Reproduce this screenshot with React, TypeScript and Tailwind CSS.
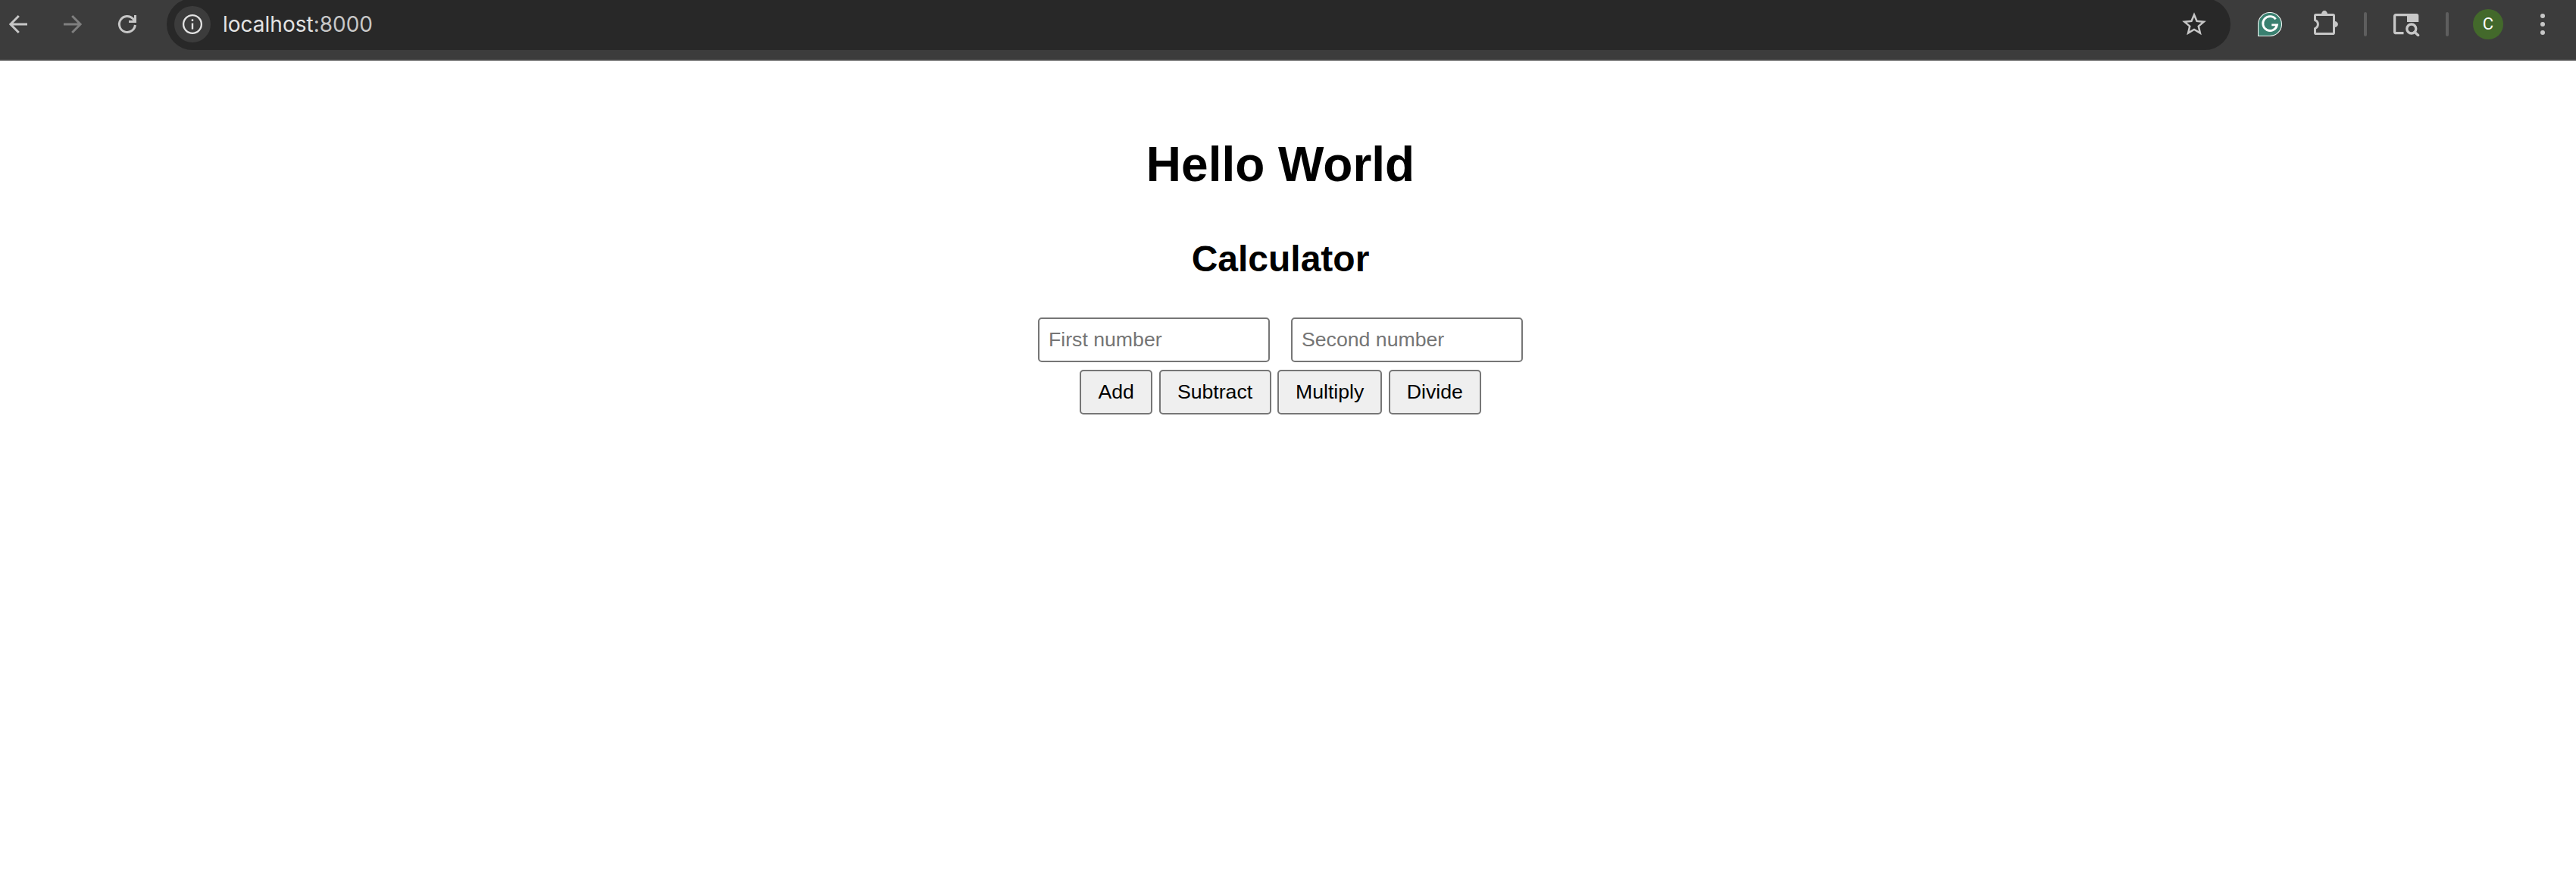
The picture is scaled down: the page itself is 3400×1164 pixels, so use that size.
import React from "react";

const ICON = "#c7c7c7";

function BackIcon() {
  return (
    <svg className="size-9 shrink-0" viewBox="0 0 36 36" fill="none" stroke={ICON} strokeWidth="3">
      <path d="M30 18H8.5M18.8 7L7.9 18L18.8 29" />
    </svg>
  );
}

function ForwardIcon() {
  return (
    <svg className="size-9 shrink-0" viewBox="0 0 36 36" fill="none" stroke="#7f7f7f" strokeWidth="3">
      <path d="M6 18H27.5M17.2 7L28.1 18L17.2 29" />
    </svg>
  );
}

function ReloadIcon() {
  return (
    <svg className="size-9 shrink-0" viewBox="0 0 36 36" fill="none" stroke={ICON} strokeWidth="3">
      <path d="M28.4 19A10.5 10.5 0 1 1 25.6 10.8L28 13.8" />
      <path d="M28.5 6V14.5H20" />
    </svg>
  );
}

function InfoIcon() {
  return (
    <svg className="size-7" viewBox="0 0 28 28" fill="none" stroke="#e3e3e3">
      <circle cx="14" cy="14" r="11.9" strokeWidth="2.3" />
      <path d="M14 12.6V20.6" strokeWidth="2.4" />
      <circle cx="14" cy="8.7" r="1.4" fill="#e3e3e3" stroke="none" />
    </svg>
  );
}

function StarIcon() {
  return (
    <svg className="size-[38px]" viewBox="0 0 24 24" fill={ICON}>
      <path d="M22 9.24l-7.19-.62L12 2 9.19 8.63 2 9.24l5.46 4.73L5.82 21 12 17.27 18.18 21l-1.63-7.03L22 9.24zM12 15.4l-3.76 2.27 1-4.28-3.32-2.88 4.38-.38L12 6.1l1.71 4.04 4.38.38-3.32 2.88 1 4.28L12 15.4z" />
    </svg>
  );
}

function GrammarlyIcon() {
  return (
    <svg className="size-8 shrink-0" viewBox="0 0 32 32">
      <path d="M0.5 31.5V16A15.5 15.5 0 1 1 16 31.5Z" fill="#3a8070" stroke="#f1f5f3" strokeWidth="1.1" />
      <path d="M23.6 9.3A9.4 9.4 0 1 0 25.4 16.9H18.3" fill="none" stroke="#fff" strokeWidth="2.9" />
    </svg>
  );
}

function PuzzleIcon() {
  return (
    <svg className="h-8 w-8 shrink-0" viewBox="0 0 32 32" fill="none">
      <path
        d="M1.5 12.6V6.8Q1.5 5.5 2.8 5.5H25.2Q26.5 5.5 26.5 6.8V29.2Q26.5 30.5 25.2 30.5H2.8Q1.5 30.5 1.5 29.2V23.6C3.8 22.8 5.4 20.6 5.4 18.1S3.8 13.4 1.5 12.6Z"
        stroke={ICON}
        strokeWidth="3"
        strokeLinejoin="round"
      />
      <path d="M10 4.5A4 4.4 0 0 1 18 4.5ZM27.5 14A4.4 4 0 0 1 27.5 22Z" fill={ICON} />
    </svg>
  );
}

function TabSearchIcon() {
  return (
    <svg className="h-8 w-9 shrink-0" viewBox="0 0 36 32" fill="none">
      <path d="M14.5 27.7H4.4Q2.6 27.7 2.6 25.9V5.4Q2.6 3.6 4.4 3.6H22" stroke={ICON} strokeWidth="3.3" />
      <path d="M19 2H31.5Q34.3 2 34.3 4.8V13H19Z" fill={ICON} />
      <circle cx="24.8" cy="22" r="6" stroke={ICON} strokeWidth="3.3" />
      <path d="M29 26.3L33.6 30.6" stroke={ICON} strokeWidth="3.4" strokeLinecap="round" />
    </svg>
  );
}

function MenuIcon() {
  return (
    <svg className="h-8 w-2 shrink-0" viewBox="0 0 8 32" fill={ICON}>
      <circle cx="4" cy="5" r="3" />
      <circle cx="4" cy="16" r="3" />
      <circle cx="4" cy="27" r="3" />
    </svg>
  );
}

function Divider() {
  return <div className="h-8 w-1 shrink-0 rounded-full bg-[#5e5e5e]" />;
}

function Toolbar() {
  return (
    <header className="h-20 overflow-hidden border-b-2 border-[#474747] bg-[#3c3c3c]">
      <div className="flex h-16 items-center pl-1.5">
        <nav className="flex shrink-0 items-center gap-9">
          <BackIcon />
          <ForwardIcon />
          <ReloadIcon />
        </nav>
        <div className="ml-[34px] flex h-[68px] w-[2724px] shrink-0 items-center rounded-full bg-[#282828] pr-[29px] pl-2.5">
          <div className="flex size-12 items-center justify-center rounded-full bg-[#3c3c3c]">
            <InfoIcon />
          </div>
          <div className="ml-4 flex-1 font-['Inter',sans-serif] text-[28px] leading-none font-[430] text-[#e3e3e3]">
            localhost<span className="text-[#c7c7c7]">:8000</span>
          </div>
          <StarIcon />
        </div>
        <div className="ml-9 flex items-center">
          <GrammarlyIcon />
          <div className="ml-[42px] pb-1">
            <PuzzleIcon />
          </div>
          <div className="ml-[34px]">
            <Divider />
          </div>
          <div className="ml-[34px]">
            <TabSearchIcon />
          </div>
          <div className="ml-[34px]">
            <Divider />
          </div>
          <div className="ml-8 flex size-10 items-center justify-center rounded-full bg-[#43692b] font-['Roboto',sans-serif] text-[22px] leading-none text-white">
            C
          </div>
          <div className="ml-12">
            <MenuIcon />
          </div>
        </div>
      </div>
    </header>
  );
}

const FIELD =
  "h-[59px] w-[306px] rounded-[5px] border-2 border-[#767676] bg-white px-3 text-[26.67px] leading-none text-black placeholder:text-[#757575] placeholder:opacity-100";

const BUTTONS = [
  { label: "Add", className: "w-24" },
  { label: "Subtract", className: "w-[148px]" },
  { label: "Multiply", className: "w-[138.5px]" },
  { label: "Divide", className: "w-[122px]" },
];

export default function App() {
  return (
    <div className="h-[1164px] w-[3400px] overflow-hidden bg-white font-['Liberation_Sans',Arial,sans-serif] text-black">
      <Toolbar />
      <main className="flex w-[3380px] flex-col items-center pt-[100px]">
        <h1 className="text-[64px] leading-[74px] font-bold">Hello World</h1>
        <h2 className="mt-[60px] text-[48px] leading-[56px] font-bold">Calculator</h2>
        <div className="mt-[49px] flex gap-7">
          <input className={FIELD} placeholder="First number" />
          <input className={FIELD} placeholder="Second number" />
        </div>
        <div className="mt-2.5 flex gap-[8.4px]">
          {BUTTONS.map((b) => (
            <button
              key={b.label}
              className={`${b.className} h-[59px] rounded-[5px] border-2 border-[#767676] bg-[#efefef] text-[26.67px] leading-none`}
            >
              {b.label}
            </button>
          ))}
        </div>
      </main>
    </div>
  );
}
